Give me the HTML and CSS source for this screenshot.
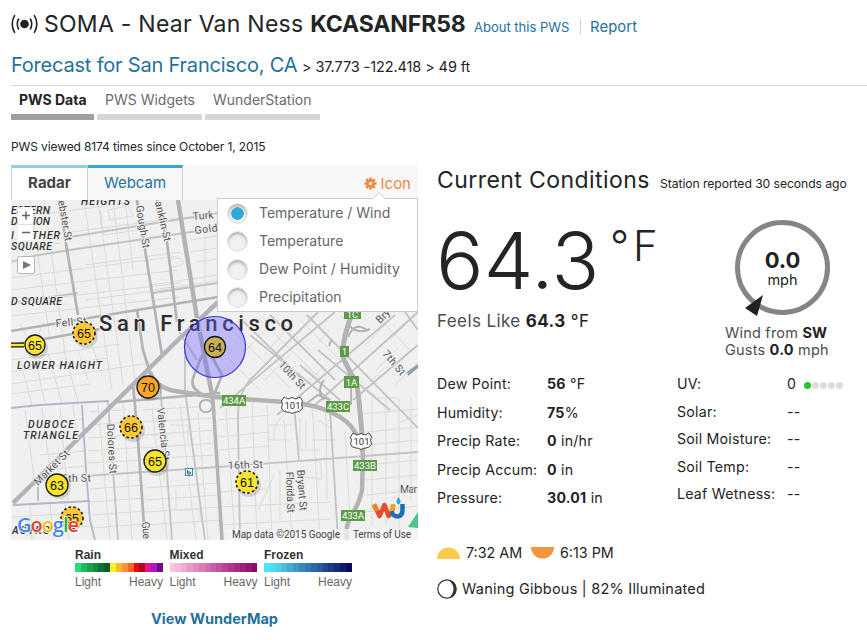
FILE: index.html
```html
<!DOCTYPE html>
<html lang="en">
<head>
<meta charset="utf-8">
<title>SOMA - Near Van Ness KCASANFR58</title>
<link rel="stylesheet" href="styles.css">
</head>
<body>
<header>
  <div class="title-row">
    <svg class="signal" width="28" height="20" viewBox="0 0 28 20" fill="none" stroke="#222" stroke-width="1.6"><circle cx="13.500" cy="10" r="4.300" fill="#222" stroke="none"/><path d="M7.800 4.500Q4.800 10 7.800 15.500M19.200 4.500Q22.200 10 19.200 15.500M3.800 1.200Q-1.400 10 3.800 18.800M23.200 1.200Q28.400 10 23.200 18.800"/></svg>
    <h1>SOMA - Near Van Ness <b>KCASANFR58</b></h1>
    <a class="about">About this PWS</a><i class="sep"></i><a class="report">Report</a>
  </div>
  <div class="place-row"><a>Forecast for San Francisco, CA</a><span>&gt; 37.773 -122.418 &gt; 49 ft</span></div>
  <nav><a class="on">PWS Data</a><a class="widgets">PWS Widgets</a><a class="station">WunderStation</a></nav>
  <p class="viewed">PWS viewed 8174 times since October 1, 2015</p>
</header>
<main>
<section class="left">
  <div class="maptabs"><a class="radar">Radar</a><a class="webcam">Webcam</a>
    <span class="iconbtn"><svg width="13" height="13" viewBox="-6.500 -6.500 13 13"><g stroke="#f5853f" stroke-width="2.500"><path d="M0-6V6M-6 0H6M-4.300-4.300L4.300 4.300M4.300-4.300L-4.300 4.300"/></g><circle r="4.300" fill="#f5853f"/><circle r="1.700" fill="#f7f7f7"/></svg>Icon</span>
  </div>
  <div class="mapwrap">
  <svg class="map" width="407" height="340" viewBox="11 200 407 340">
    <rect x="11" y="200" width="407" height="340" fill="#f0f0f0"/>
    <g class="minor">
      <path d="M30 200L50 340M44 200L66 360M84 200L112 390M98 200L123 385M113 200L136 390M125 200L133 270M11 218L130 203M11 240L178 218M11 250L60 243M11 278L178 256M11 290L178 270M11 303L180 283M11 316L180 297M85 265L180 252M85 300L215 283M11 360L120 344M11 372L108 358M11 384L150 363M11 394L90 384M108 210l20-4 6 10-24 4zM100 210l4 25 35-5M168 260l12-2q6 5-1 8l-10 1M150 285L218 275M151 290L218 281M190 240L218 236M190 252L218 248M196 262L218 259M20 325l12 20 12-22M205 235v60"/>
      <path d="M20 360L32 405M34 355L45 403M48 353L62 404M64 350L78 402M78 350L88 380M92 345L100 370M25 410L35 485M42 408L50 470M60 407L68 500M73 405L76 430M28 425L82 419M30 438L60 434M40 455L85 451M45 470L85 466M90 412L122 410M88 425L145 421M88 438L145 434M88 451L145 447M88 463L145 460M90 489L145 485M90 502L145 498M92 515L145 511M92 528L145 524M98 405L110 540M123 400L132 540M50 500L53 540M65 500L69 540M30 505L32 540M13 517L90 512M15 530L93 526"/>
      <path d="M152 408L167 540M180 404L196 540M198 412L208 540M142 410L212 406M142 422L215 418M142 435L216 430M142 448L216 443M142 459L216 455M145 488L220 483M145 500L220 495M145 512L220 507M145 525L222 520M150 435H164V480M170 425H188V445M176 490V510H200V520"/>
      <path d="M218 420L270 415M218 437L270 432M218 450L270 446M218 492L265 489M218 507L330 502M218 525L330 519M226 408L235 540M252 400L257 540M267 405L272 540M274 440Q272 420 289 412M284 420L292 540M300 418V450H320M306 420V448M312 405L320 540M326 410L327 500M300 461h20l2 18-18-2M345 430L350 520M268 425h28M268 440h22M274 475L258 510M280 470V520M312 440h25M318 420l12 8"/>
      <path d="M372 398V525M386 398V525M399 398V540M411 398V500M362 414L418 409M366 432L418 427M366 445L418 440M366 465L418 460M366 480L418 475M366 495L418 490M366 512L418 506M374 398H398M376 397L355 375M398 423L418 415"/>
      <path d="M232 330L290 388M258 318L322 380M230 360L260 390M300 320L345 365M310 350L285 325M325 388L300 358M244 352L270 325M265 355L292 322M265 380L290 355M300 390L328 362M330 330L318 342M380 320L410 350M365 345L395 315M376 370L398 348M395 385L418 362M390 340L405 325M370 382L384 368M355 330L340 315"/>
    </g>
    <g class="mid">
      <path d="M11 303L78 293M11 262L33 256L70 250L218 228M70 237L218 213M153 293L218 283M85 476L218 467 418 452M240 318L303 380M270 315L335 380M307 315L420 430M220 408L335 312M277 415L395 315M315 405L418 312M250 335L330 400M318 350L390 410M405 312L418 330M353 400L418 345M340 400L300 365M330 410L338 540M294 405L299 460"/>
      <path d="M240 540L238 420Q237 390 255 375L318 312M160 383L167 473 172 540M108 400L118 540M185 350V390L205 540M178 330L197 360"/>
    </g>
    <g class="blue"><path d="M11 408L40 405 108 401M82 405L86 470 90 520 95 540M13 505L90 501M38 501V487"/></g>
    <path d="M13 503L178 340 218 302" stroke="#b1b3b9" stroke-width="4.500" fill="none"/>
    <path d="M407 372l11-8v4l-10 8z" fill="#8e9bb5"/>
    <g class="major">
      <path d="M60 200L65 238 78 315M137 200L147 262 162 355M157 200L167 242 177 322"/>
      <path d="M11 331L137 310 218 297M11 345L100 329M117 402L220 393"/>
      <path d="M133 383L138 440 145 540M137 310L143 350 150 373"/>
      <path d="M178 200L197 318 213 400" stroke-width="4.500"/><path d="M213 400L222 540" stroke-width="3.500"/>
      <path d="M150 372Q155 387 175 391L215 397 285 402Q330 405 350 425 362 440 363 455L362 490Q360 502 350 518 345 527 347 540" stroke-width="4.500"/>
      <path d="M202 355L193 378Q190 390 205 395M211 355L222 375 212 400"/>
      <path d="M352 314Q340 345 344 360L357 385Q361 415 363 450" stroke-width="5"/>
      <path d="M348 368Q352 385 351 404L335 402M324 380Q316 390 324 400M307 403L318 395 330 400" stroke-width="2"/>
      <path d="M348 325Q358 335 370 329M348 337Q355 320 368 331M332 340Q328 345 330 346" stroke-width="2"/>
      <circle cx="206" cy="406" r="6.300" fill="#f0f0f0" stroke-width="2"/>
    </g>
    <path d="M408 527l10-15v16z" fill="#4ac58b"/>
    <g class="street">
      <text transform="translate(58 201) rotate(80)" textLength="41">ebster St</text>
      <text transform="translate(136 206) rotate(81)" textLength="43">Gough St</text>
      <text transform="translate(155 202) rotate(77)" textLength="41">anklin St</text>
      <text transform="translate(193 220) rotate(-5)" textLength="21">Turk</text>
      <text transform="translate(195 234) rotate(-7)" textLength="23">Gold</text>
      <text transform="translate(56 327) rotate(-5)" textLength="31">Fell St</text>
      <text transform="translate(38 486) rotate(-45)" textLength="45">Market St</text>
      <text transform="translate(62 482) rotate(-1)" textLength="29">5th St</text>
      <text transform="translate(107 424) rotate(87)" textLength="50">Dolores St</text>
      <text transform="translate(157 408) rotate(84)" textLength="53">Valencia St</text>
      <text transform="translate(142 522) rotate(86)" textLength="17">Gue</text>
      <text transform="translate(228 469) rotate(-2)" textLength="35">16th St</text>
      <text transform="translate(297 470) rotate(86)" textLength="41">Bryant St</text>
      <text transform="translate(286 472) rotate(88)" textLength="41">Florida St</text>
      <text transform="translate(278 365) rotate(47)" textLength="34">10th St</text>
      <text transform="translate(382 354) rotate(50)" textLength="29">7th St</text>
      <text transform="translate(380 324) rotate(-45)">Bry</text>
      <text x="400" y="493" textLength="17">Mar</text>
    </g>
    <g class="hood">
      <text x="81" y="205" textLength="49">HEIGHTS</text>
      <text x="11" y="214" textLength="39">ESTERN</text>
      <text x="11" y="225" textLength="39">DDITION</text>
      <text x="11" y="239" textLength="49">I  LATHER</text>
      <text x="11" y="250" textLength="41">SQUARE</text>
      <text x="11" y="305" textLength="51">D SQUARE</text>
      <text x="17" y="369" textLength="85">LOWER HAIGHT</text>
      <text x="28" y="428" textLength="46">DUBOCE</text>
      <text x="23" y="439" textLength="55">TRIANGLE</text>
      <text x="12" y="534" textLength="38">ASTRO</text>
    </g>
    <text class="city" x="99" y="331" textLength="194">San Francisco</text>
    <g class="exits">
      <rect x="344" y="311" width="17" height="8"/><rect x="340" y="346" width="9" height="11"/><rect x="344" y="376" width="15" height="12"/><rect x="222" y="395" width="24" height="11"/><rect x="326" y="401" width="24" height="11"/><rect x="353" y="460" width="24" height="11"/><rect x="341" y="510" width="24" height="11"/>
      <text x="352.500" y="318">1C</text><text x="344.500" y="355">1</text><text x="351.500" y="386">1A</text><text x="234" y="404">434A</text><text x="338" y="410">433C</text><text x="365" y="469">433B</text><text x="353" y="519">433A</text>
    </g>
    <g class="shield">
      <path d="M284 397l4 2 4-1.500 4 1.500 4-2 2.500 4q-2 3 0 7-2 4-5.500 4-3 0-5 1.500-2-1.500-5-1.500-4 0-5.500-4 2-4 0-7z"/><path d="M353 433l4 2 4-1.500 4 1.500 4-2 2.500 4q-2 3 0 7-2 4-5.500 4-3 0-5 1.500-2-1.500-5-1.500-4 0-5.500-4 2-4 0-7z"/>
      <text x="292.500" y="409">101</text><text x="361.500" y="445">101</text>
    </g>
    <rect x="185.500" y="468.500" width="7" height="7" fill="#fff" stroke="#2a93bd"/><path d="M187.500 470v4h3v-2h-3" fill="none" stroke="#555"/>
    <circle cx="215" cy="347" r="30.500" fill="#6d61ff" fill-opacity=".38" stroke="#3b32d6" stroke-width="1.200"/>
    <path d="M11 345h13" stroke="#111" stroke-width="5"/><path d="M11 345h15" stroke="#ffe632" stroke-width="2.500"/>
    <g class="pins">
      <circle class="shadow" cx="37" cy="348" r="11"/><circle class="shadow" cx="150" cy="389" r="12"/><circle class="shadow" cx="157" cy="464" r="12"/><circle class="shadow" cx="59" cy="487" r="12"/><circle class="shadow" cx="86" cy="336" r="12"/><circle class="shadow" cx="133" cy="430" r="12"/><circle class="shadow" cx="249" cy="485" r="12"/>
      <circle cx="35" cy="345" r="10" fill="#fde334"/><text x="35" y="349.500">65</text>
      <circle class="dash" cx="84" cy="333" r="11" fill="#ffc832"/><text x="84" y="337.500">65</text>
      <circle cx="215" cy="347" r="10.500" fill="#c9ad58"/><text x="215" y="351.500">64</text>
      <circle cx="148" cy="387" r="11" fill="#fba524"/><text x="148" y="391.500">70</text>
      <circle class="dash" cx="131" cy="427" r="11" fill="#ffc832"/><text x="131" y="431.500">66</text>
      <circle cx="155" cy="461" r="11" fill="#fbe52c"/><text x="155" y="465.500">65</text>
      <circle cx="57" cy="485" r="11" fill="#fbe52c"/><text x="57" y="489.500">63</text>
      <circle class="dash" cx="247" cy="482" r="11" fill="#fbe52c"/><text x="247" y="486.500">61</text>
      <circle class="dash" cx="72" cy="518" r="11" fill="#ffc832"/><text x="72" y="522.500">65</text>
    </g>
    <text class="google" x="17" y="532" textLength="62"><tspan fill="#4285f4">G</tspan><tspan fill="#ea4335">o</tspan><tspan fill="#fbbc05">o</tspan><tspan fill="#4285f4">g</tspan><tspan fill="#34a853">l</tspan><tspan fill="#ea4335">e</tspan></text>
    <g fill="none" stroke-width="4.500" stroke-linejoin="round"><path d="M374 504.500L379.500 516 384.500 505 388.500 516Q393 512 393 505" stroke="#e8492f"/><path d="M374 504.500L377 511" stroke="#f58220"/><path d="M393 504q0 5-2.500 9" stroke="#f9a51a"/><path d="M391.500 511q1.500 5.500 6 5.500 5-.5 5-6.500V504" stroke="#1d6fb5"/></g><path d="M398.500 497q-4 6 0 7.500 4-1.500 0-7.500z" fill="#2ba6de"/>
    <rect x="226" y="529" width="192" height="11" fill="#f5f5f5" fill-opacity=".75"/>
    <g class="attr"><text x="232" y="538" textLength="108">Map data ©2015 Google</text><text x="353" y="538" textLength="58">Terms of Use</text></g>
    <g class="zoom"><rect x="18" y="207" width="15" height="33" rx="1.500" fill="#fff"/><path d="M19 224.500h13" stroke="#ddd"/><path d="M22 215.500h8M26 211.500v8M22 232.500h8" stroke="#666" stroke-width="1.500"/><rect x="17.500" y="256.500" width="17" height="17" rx="2" fill="#fff" stroke="#b5b5b5"/><path d="M23 261l8 4-8 4z" fill="#777"/></g>
  </svg>
  <div class="menu">
    <svg class="tip" width="14" height="8" viewBox="0 0 14 8"><path d="M0 7.500L7 .5l7 7" fill="#fff" stroke="#ccc"/></svg>
    <label><i class="dot sel"></i><span class="m1">Temperature / Wind</span></label>
    <label><i class="dot"></i><span class="m2">Temperature</span></label>
    <label><i class="dot"></i><span class="m3">Dew Point / Humidity</span></label>
    <label><i class="dot"></i><span class="m4">Precipitation</span></label>
  </div>
  </div>
  <div class="legend">
    <div><b>Rain</b><div class="bar"><i style="background:#2bdb7c"></i><i style="background:#22b85c"></i><i style="background:#1ca04b"></i><i style="background:#168a3e"></i><i style="background:#0e7032"></i><i style="background:#0a5c28"></i><i style="background:#fff02e"></i><i style="background:#f6bb2b"></i><i style="background:#ff8f3a"></i><i style="background:#f5651f"></i><i style="background:#e00d12"></i><i style="background:#b0061a"></i><i style="background:#ec0f8e"></i><i style="background:#a41ad0"></i><i style="background:#760a80"></i></div><p><span>Light</span><span>Heavy</span></p></div>
    <div><b>Mixed</b><div class="bar"><i style="background:#fcc7dc"></i><i style="background:#f7bad5"></i><i style="background:#f0aacd"></i><i style="background:#e79ac4"></i><i style="background:#e08bbb"></i><i style="background:#d97cb4"></i><i style="background:#d06ead"></i><i style="background:#c961a5"></i><i style="background:#c1539e"></i><i style="background:#b94496"></i><i style="background:#b0378d"></i><i style="background:#a82b85"></i><i style="background:#9f207c"></i><i style="background:#961673"></i><i style="background:#8c0d68"></i></div><p><span>Light</span><span>Heavy</span></p></div>
    <div><b>Frozen</b><div class="bar"><i style="background:#4be5f2"></i><i style="background:#4ddcec"></i><i style="background:#4bcfe6"></i><i style="background:#48bddb"></i><i style="background:#43abd0"></i><i style="background:#3d9ac5"></i><i style="background:#3789ba"></i><i style="background:#3179af"></i><i style="background:#2b69a4"></i><i style="background:#265a99"></i><i style="background:#204a8d"></i><i style="background:#1a3b81"></i><i style="background:#142c74"></i><i style="background:#0e1d67"></i><i style="background:#080c59"></i></div><p><span>Light</span><span>Heavy</span></p></div>
  </div>
  <a class="wundermap">View WunderMap</a>
</section>
<section class="right">
  <div class="cc"><h2>Current Conditions</h2><span>Station reported 30 seconds ago</span></div>
  <div class="now">
    <div class="tempcol">
      <div class="temp"><span class="big">64.3</span><span class="deg">°F</span></div>
      <div class="feels">Feels Like <b>64.3</b> <em>°F</em></div>
    </div>
    <div class="windcol">
      <div class="dial"><svg width="97" height="97" viewBox="734 219 97 97"><circle cx="782.500" cy="267.500" r="45" fill="none" stroke="#858585" stroke-width="5"/><path d="M763 295l-6 21-12-8z" fill="#222"/></svg><div class="speed"><b>0.0</b><span>mph</span></div></div>
      <p class="from">Wind from <b>SW</b></p><p class="gusts">Gusts <b>0.0</b> mph</p>
    </div>
  </div>
  <div class="stats">
    <dl class="s1"><dt>Dew Point:</dt><dd><b>56</b> °F</dd><dt>Humidity:</dt><dd><b>75</b>%</dd><dt>Precip Rate:</dt><dd><b>0</b> in/hr</dd><dt>Precip Accum:</dt><dd><b>0</b> in</dd><dt>Pressure:</dt><dd><b>30.01</b> in</dd></dl>
    <dl class="s2"><dt>UV:</dt><dd>0 <span class="uv"><i></i><i></i><i></i><i></i><i></i></span></dd><dt>Solar:</dt><dd>--</dd><dt>Soil Moisture:</dt><dd>--</dd><dt>Soil Temp:</dt><dd>--</dd><dt>Leaf Wetness:</dt><dd>--</dd></dl>
  </div>
  <div class="sun"><svg width="23" height="12" viewBox="0 0 23 12"><path d="M0 12a11.500 11.500 0 0 1 23 0z" fill="#facb4b"/></svg><span class="rise">7:32 AM</span><svg width="23" height="12" viewBox="0 0 23 12"><path d="M0 0a11.500 11.500 0 0 0 23 0z" fill="#f2963f"/></svg><span>6:13 PM</span></div>
  <div class="moon"><svg width="20" height="20" viewBox="0 0 20 20"><circle cx="10" cy="10" r="9.200" fill="#fff" stroke="#333" stroke-width="1.200"/><path d="M12 1a9.200 9.200 0 0 1 0 18q9-9 0-18z" fill="#333"/></svg><span>Waning Gibbous | 82% Illuminated</span></div>
</section>
</main>
</body>
</html>
```
FILE: styles.css
```css
* { box-sizing: border-box; margin: 0; padding: 0; }
body { width: 867px; height: 640px; overflow: hidden; background: #fff; color: #222426; font-family: Inter, "Open Sans", sans-serif; }
i, em { font-style: normal; }
a { color: #24719c; }
header { padding-left: 11px; }
.title-row { height: 47px; display: flex; align-items: baseline; line-height: 48px; white-space: nowrap; }
.signal { align-self: center; margin-right: 5px; }
h1 { font-size: 23px; font-weight: 400; width: 430px; letter-spacing: .26px; }
h1 b { letter-spacing: -.1px; }
.about { font-size: 13px; width: 96px; }
.sep { width: 1px; height: 15px; background: #ccd3d6; margin: 0 9px 0 10px; align-self: center; position: relative; top: 3px; }
.report { font-size: 14.800px; letter-spacing: .1px; }
.place-row { height: 39px; padding-bottom: 3px; line-height: 36px; border-bottom: 1px solid #d3d6d6; display: flex; align-items: baseline; white-space: nowrap; }
.place-row a { font-size: 20px; width: 291px; letter-spacing: -.2px; }
.place-row span { font-size: 14.500px; letter-spacing: -.1px; }
nav { display: flex; gap: 3px; height: 34px; }
nav a { color: #6b6b6b; font-size: 14px; line-height: 28px; border-bottom: 6px solid #d6d6d6; padding-left: 8px; width: 105px; white-space: nowrap; }
nav .on { color: #222; font-weight: 700; width: 83px; border-color: #a0a0a0; }
nav .station { width: 115px; }
.viewed { font-size: 12px; line-height: 17px; padding: 18px 0 10px; height: 45px; letter-spacing: -.12px; }
main { display: flex; padding-left: 11px; gap: 19px; }
.left { width: 407px; }
.maptabs { display: flex; height: 35px; background: #f7f7f7; font-size: 15px; line-height: 30px; }
.maptabs a { text-align: center; border-top: 3px solid #3fa3cb; border-right: 1px solid #d2d2d2; width: 95px; }
.maptabs .radar { color: #444; font-weight: 700; background: #fff; border-top-color: #9acce0; border-left: 1px solid #d2d2d2; width: 77px; }
.iconbtn { margin-left: auto; padding: 2px 7px 0 0; color: #f5853f; display: flex; align-items: center; gap: 4px; }
.mapwrap { position: relative; height: 340px; }
.map { display: block; }
.map text { font-family: Roboto, sans-serif; }
.minor path { stroke: #dedbd5; fill: none; stroke-width: 1; }
.mid path { stroke: #c3c3c3; fill: none; stroke-width: 1.800; }
.major { stroke: #b3b3b3; fill: none; stroke-width: 2.700; }
.blue path { stroke: #b3b7c8; fill: none; stroke-width: 1.800; }
.street text { font-size: 10.500px; fill: #555; stroke: #f0f0f0; stroke-width: 2px; paint-order: stroke; }
.hood text { font-size: 10.500px; font-weight: 500; font-style: italic; fill: #333; stroke: #f0f0f0; stroke-width: 2px; paint-order: stroke; }
.city { font-size: 22px; font-weight: 500; fill: #2e2e2e; stroke: #f0f0f0; stroke-width: 2px; paint-order: stroke; }
.exits rect { fill: #5b9c47; }
.exits text { font-size: 9.500px; fill: #fff; text-anchor: middle; }
.shield path { fill: #fff; stroke: #444; }
.shield text { font-size: 9.500px; fill: #333; text-anchor: middle; }
.pins circle { stroke: #191919; stroke-width: 1.300; }
.pins .dash { stroke-dasharray: 2.500 2.300; stroke-width: 1.600; }
.pins .shadow { fill: #000; fill-opacity: .13; stroke: none; }
.map .pins text { font: 12.500px "Liberation Sans", sans-serif; text-anchor: middle; fill: #111; }
.map .google { font: 20px "Open Sans", sans-serif; font-weight: 600; stroke: #fff; stroke-width: 1.500px; paint-order: stroke; }
.attr text { font-size: 10px; fill: #444; }
.menu { position: absolute; left: 206px; top: -2px; width: 201px; height: 114px; background: #fff; border: 1px solid #ccc; }
.tip { position: absolute; left: 154px; top: -7px; }
.menu label { display: flex; align-items: center; height: 28px; padding-left: 9px; gap: 11px; color: #63676b; font-size: 14px; white-space: nowrap; }
.menu span { margin-top: -1px; }
.menu .m3 { letter-spacing: .1px; }
.dot { width: 21px; height: 21px; border-radius: 50%; background: #f1f1f1; border: 1px solid #e1e1e1; box-shadow: inset 0 2px 3px #ababab; margin-top: 1px; }
.sel { background: radial-gradient(circle, #2fa8db 0 6px, #f1f1f1 6.500px); }
.legend { display: flex; gap: 6.500px; padding: 8px 0 0 64px; font: 12px "Liberation Sans", sans-serif; height: 62px; }
.legend > div { width: 88px; }
.legend b { display: block; line-height: 15px; color: #333; }
.bar { display: flex; height: 9px; }
.bar i { flex: 1; }
.legend p { display: flex; justify-content: space-between; line-height: 20px; color: #666; }
.wundermap { display: block; text-align: center; font-size: 14.500px; font-weight: 700; line-height: 34px; }
.right { width: 430px; white-space: nowrap; }
.cc { display: flex; align-items: baseline; height: 30px; line-height: 30px; }
.cc h2 { font-size: 23px; font-weight: 400; width: 223px; letter-spacing: .42px; }
.cc span { font-size: 12.200px; letter-spacing: -.08px; }
.now { display: flex; height: 175px; }
.tempcol { width: 297px; padding-top: 24px; }
.temp { display: flex; height: 84px; align-items: flex-start; font-weight: 300; }
.big { font-size: 79px; line-height: 83px; width: 174px; letter-spacing: .3px; margin-left: -1px; }
.deg { font-size: 42px; line-height: 53px; letter-spacing: 4px; }
.feels { font-size: 17px; line-height: 28px; padding-top: 4px; color: #4b4d4f; letter-spacing: .4px; }
.feels b, .feels em, .windcol b { color: #222; }
.windcol { padding-top: 24px; color: #4b4d4f; }
.dial { position: relative; width: 97px; height: 97px; }
.speed { position: absolute; inset: 0; display: flex; flex-direction: column; align-items: center; padding-top: 30px; color: #222; }
.speed b { font-size: 22px; line-height: 22px; }
.speed span { font-size: 14.500px; line-height: 18px; }
.windcol p { font-size: 14.500px; line-height: 17px; margin-left: -9px; letter-spacing: .2px; }
.windcol .from { padding-top: 8px; line-height: 17px; }
.stats { display: flex; font-size: 14.200px; letter-spacing: .22px; }
dl { display: grid; }
.s1 { width: 240px; grid-template-columns: 110px 1fr; grid-auto-rows: 28.500px; line-height: 27px; }
.s2 { grid-template-columns: 110px 1fr; grid-auto-rows: 27.500px; line-height: 27px; }
.uv { margin-left: 4px; display: inline-flex; gap: 1px; }
.uv i { width: 7px; height: 7px; border-radius: 50%; background: #ddd; }
.uv i:first-child { background: #25c52c; }
.sun { display: flex; align-items: center; gap: 6px; margin-top: 28px; height: 24px; font-size: 14.300px; }
.rise { width: 57px; margin-right: 2px; }
.moon { display: flex; align-items: center; gap: 5px; margin-top: 12px; height: 24px; font-size: 14.500px; letter-spacing: .23px; }
```
